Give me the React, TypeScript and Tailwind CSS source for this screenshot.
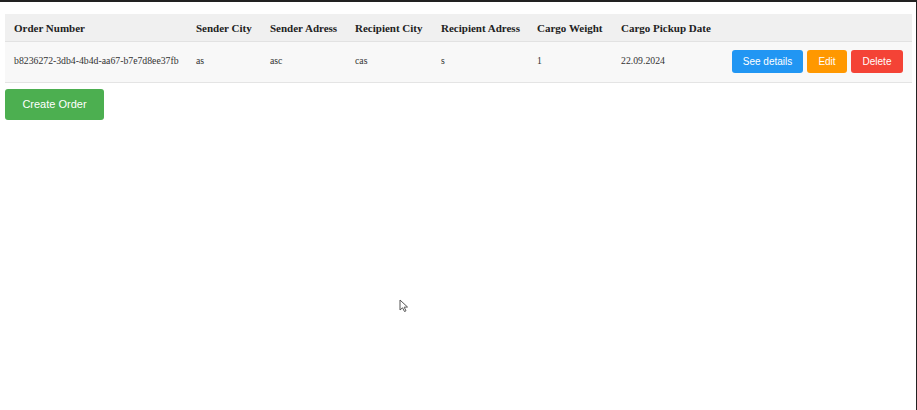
import React from 'react';

interface Order {
  id: string;
  senderCity: string;
  senderAddress: string;
  recipientCity: string;
  recipientAddress: string;
  cargoWeight: string;
  pickupDate: string;
}

const orders: Order[] = [
  {
    id: 'b8236272-3db4-4b4d-aa67-b7e7d8ee37fb',
    senderCity: 'as',
    senderAddress: 'asc',
    recipientCity: 'cas',
    recipientAddress: 's',
    cargoWeight: '1',
    pickupDate: '22.09.2024',
  },
];

const headers = [
  { label: 'Order Number', w: 'w-[182px]' },
  { label: 'Sender City', w: 'w-[74px]' },
  { label: 'Sender Adress', w: 'w-[85px]' },
  { label: 'Recipient City', w: 'w-[86px]' },
  { label: 'Recipient Adress', w: 'w-[96px]' },
  { label: 'Cargo Weight', w: 'w-[84px]' },
  { label: 'Cargo Pickup Date', w: 'w-[111px]' },
  { label: '', w: '' },
];

const App: React.FC = () => {
  return (
    <div className="relative h-[410px] w-[917px] border-t-2 border-r border-[#222] bg-white font-['Liberation_Serif',serif]">
      <div className="px-[5px] pt-[12px]">
        <table className="w-[907px] table-fixed border-collapse">
          <thead>
            <tr className="h-[27px] bg-[#f0f0f0] border-b border-[#e2e2e2]">
              {headers.map((h, i) => (
                <th
                  key={i}
                  className={`${h.w} pl-[9px] pt-[1px] text-left text-[11px] font-bold text-[#222]`}
                >
                  {h.label}
                </th>
              ))}
            </tr>
          </thead>
          <tbody>
            {orders.map((o) => (
              <tr key={o.id} className="h-[41px] bg-[#f8f8f8] border-b border-[#e4e4e4] text-[9.75px] text-[#333]">
                <td className="pl-[9px]">{o.id}</td>
                <td className="pl-[9px]">{o.senderCity}</td>
                <td className="pl-[9px]">{o.senderAddress}</td>
                <td className="pl-[9px]">{o.recipientCity}</td>
                <td className="pl-[9px]">{o.recipientAddress}</td>
                <td className="pl-[9px]">{o.cargoWeight}</td>
                <td className="pl-[9px]">{o.pickupDate}</td>
                <td className="pl-[9px]">
                  <div className="flex gap-[4px] font-['Liberation_Sans',sans-serif] text-[10px] text-white">
                    <button className="h-[23px] w-[71px] rounded-[3px] bg-[#2196f3]">See details</button>
                    <button className="h-[23px] w-[40px] rounded-[3px] bg-[#ff9800]">Edit</button>
                    <button className="h-[23px] w-[52px] rounded-[3px] bg-[#f44336]">Delete</button>
                  </div>
                </td>
              </tr>
            ))}
          </tbody>
        </table>
        <button className="mt-[6px] h-[31px] w-[99px] rounded-[3px] bg-[#4caf50] font-['Liberation_Sans',sans-serif] text-[11px] text-white">
          Create Order
        </button>
      </div>
      {/* mouse pointer */}
      <svg className="absolute left-[399px] top-[297px]" width="10" height="14" viewBox="0 0 10 14">
        <path d="M1 1 L1 11 L3.5 8.8 L5.5 12.5 L7 11.8 L5.2 8.2 L8.5 8 Z" fill="white" stroke="#555" strokeWidth="1" />
      </svg>
    </div>
  );
};

export default App;
